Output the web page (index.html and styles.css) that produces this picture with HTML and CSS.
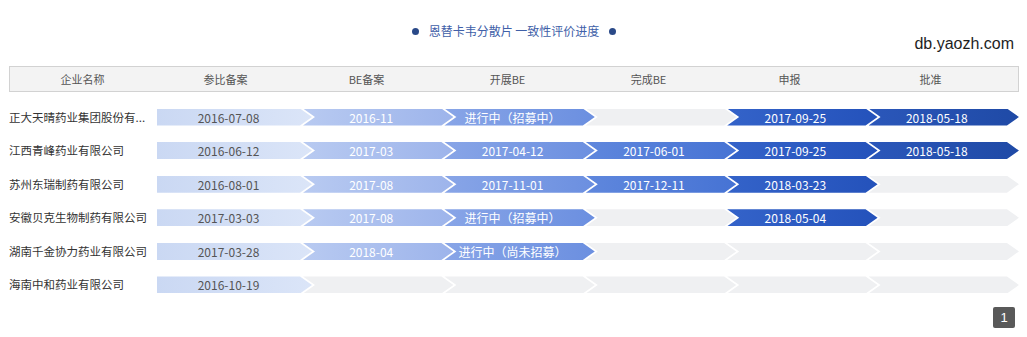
FILE: index.html
```html
<!DOCTYPE html>
<html lang="zh">
<head>
<meta charset="utf-8">
<title>恩替卡韦分散片 一致性评价进度</title>
<link rel="stylesheet" href="styles.css">
</head>
<body>
<div class="top">
  <div class="title"><span class="dot"></span><span>恩替卡韦分散片 一致性评价进度</span><span class="dot"></span></div>
  <div class="site">db.yaozh.com</div>
</div>
<div class="head">
  <div>企业名称</div><div>参比备案</div><div>BE备案</div><div>开展BE</div><div>完成BE</div><div>申报</div><div>批准</div><div></div>
</div>
<div class="rows">
  <div class="row">
    <div class="name">正大天晴药业集团股份有...</div>
    <div class="seg s1">2016-07-08</div>
    <div class="seg s2">2016-11</div>
    <div class="seg s3">进行中（招募中）</div>
    <div class="seg empty"></div>
    <div class="seg s5">2017-09-25</div>
    <div class="seg s6">2018-05-18</div>
  </div>
  <div class="row">
    <div class="name">江西青峰药业有限公司</div>
    <div class="seg s1">2016-06-12</div>
    <div class="seg s2">2017-03</div>
    <div class="seg s3">2017-04-12</div>
    <div class="seg s4">2017-06-01</div>
    <div class="seg s5">2017-09-25</div>
    <div class="seg s6">2018-05-18</div>
  </div>
  <div class="row">
    <div class="name">苏州东瑞制药有限公司</div>
    <div class="seg s1">2016-08-01</div>
    <div class="seg s2">2017-08</div>
    <div class="seg s3">2017-11-01</div>
    <div class="seg s4">2017-12-11</div>
    <div class="seg s5">2018-03-23</div>
    <div class="seg empty"></div>
  </div>
  <div class="row">
    <div class="name">安徽贝克生物制药有限公司</div>
    <div class="seg s1">2017-03-03</div>
    <div class="seg s2">2017-08</div>
    <div class="seg s3">进行中（招募中）</div>
    <div class="seg empty"></div>
    <div class="seg s5">2018-05-04</div>
    <div class="seg empty"></div>
  </div>
  <div class="row">
    <div class="name">湖南千金协力药业有限公司</div>
    <div class="seg s1">2017-03-28</div>
    <div class="seg s2">2018-04</div>
    <div class="seg s3">进行中（尚未招募）</div>
    <div class="seg empty"></div>
    <div class="seg empty"></div>
    <div class="seg empty"></div>
  </div>
  <div class="row">
    <div class="name">海南中和药业有限公司</div>
    <div class="seg s1">2016-10-19</div>
    <div class="seg empty"></div>
    <div class="seg empty"></div>
    <div class="seg empty"></div>
    <div class="seg empty"></div>
    <div class="seg empty"></div>
  </div>
</div>
<div class="pager"><span class="page">1</span></div>
</body>
</html>
```

FILE: styles.css
```css
* { box-sizing: border-box; }
html, body { margin: 0; padding: 0; background: #fff; }
body {
  font-family: "Noto Sans CJK SC", "Noto Sans", sans-serif;
  color: #333;
  width: 1027px;
  height: 337px;
  overflow: hidden;
}
.top {
  height: 66px;
  padding-top: 23px;
}
.title {
  display: flex;
  justify-content: center;
  align-items: center;
  gap: 10px;
  height: 16px;
  font-size: 12px;
  line-height: 16px;
  color: #4060a8;
  padding-left: 1px;
}
.dot {
  width: 7px;
  height: 7px;
  border-radius: 50%;
  background: #2a4988;
}
.site {
  text-align: right;
  margin-top: -4px;
  padding-right: 13px;
  font-family: "Liberation Sans", "Noto Sans", sans-serif;
  font-size: 16px;
  line-height: 18px;
  color: #1e1e1e;
}
.head {
  margin: 0 8px 0 9px;
  height: 26px;
  background: #f3f3f3;
  border: 1px solid #d2d2d2;
  display: grid;
  grid-template-columns: 145px repeat(6, 141px) 1fr;
  align-items: center;
  font-size: 11px;
  color: #555;
  text-align: center;
}
.rows {
  padding-top: 16.5px;
  display: flex;
  flex-direction: column;
  gap: 16.6px;
}
.row {
  display: flex;
  align-items: center;
  height: 17px;
  padding-left: 9px;
}
.name {
  width: 148px;
  font-size: 11.5px;
  color: #333;
  white-space: nowrap;
  overflow: hidden;
  line-height: 17px;
}
.seg {
  width: 150.4px;
  height: 17px;
  margin-left: -9px;
  padding-right: 14px;
  display: flex;
  align-items: center;
  justify-content: center;
  font-size: 12px;
  line-height: 17px;
  color: #fff;
  white-space: nowrap;
  clip-path: polygon(0 0, calc(100% - 12px) 0, 100% 50%, calc(100% - 12px) 100%, 0 100%, 12px 50%);
}
.seg.s1 {
  width: 155px;
  margin-left: 0;
  padding-right: 12px;
  color: #555;
  background: linear-gradient(90deg, #cad8f3, #dbe5f8);
  clip-path: polygon(0 0, calc(100% - 12px) 0, 100% 50%, calc(100% - 12px) 100%, 0 100%);
}
.seg.s2 { background: linear-gradient(90deg, #b8caf1, #9db4eb); }
.seg.s3 { background: linear-gradient(90deg, #88a5e7, #6b8fe0); }
.seg.s4 { background: linear-gradient(90deg, #5f87dd, #4673d4); }
.seg.s5 { background: linear-gradient(90deg, #3463c9, #2452bb); }
.seg.s6 { background: linear-gradient(90deg, #2b57ba, #1f4aa6); }
.seg.empty { background: #eff0f2; }
.pager {
  display: flex;
  justify-content: flex-end;
  padding-right: 12px;
  margin-top: 13.5px;
}
.page {
  width: 22px;
  height: 21px;
  background: #595959;
  color: #fff;
  border-radius: 2px;
  font-family: "Liberation Sans", sans-serif;
  font-size: 13px;
  line-height: 21px;
  text-align: center;
}
```
